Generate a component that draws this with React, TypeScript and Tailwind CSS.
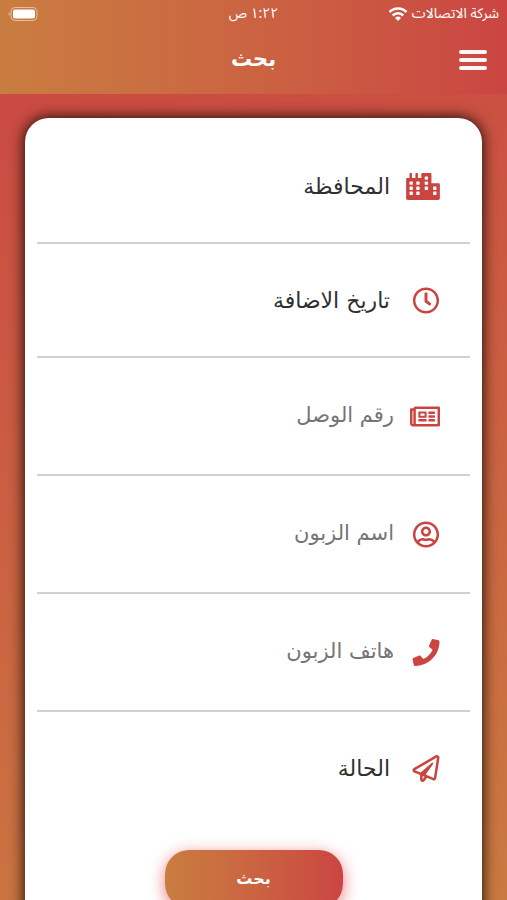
import type { ReactNode } from 'react';
import type { IconType } from 'react-icons';
import { FaCity, FaPhone, FaRegClock, FaRegNewspaper, FaRegPaperPlane, FaRegUserCircle } from 'react-icons/fa';

type Field = {
  id: string;
  label: string;
  icon: IconType;
  iconSize: string;
  kind: 'picker' | 'text' | 'tel';
};

const fields: Field[] = [
  { id: 'province', label: 'المحافظة', icon: FaCity, iconSize: 'w-[34px] h-[27px]', kind: 'picker' },
  { id: 'date', label: 'تاريخ الاضافة', icon: FaRegClock, iconSize: 'w-7 h-[27px]', kind: 'picker' },
  { id: 'receipt', label: 'رقم الوصل', icon: FaRegNewspaper, iconSize: 'w-[30px] h-[27px]', kind: 'text' },
  { id: 'customer', label: 'اسم الزبون', icon: FaRegUserCircle, iconSize: 'w-7 h-[27px]', kind: 'text' },
  { id: 'phone', label: 'هاتف الزبون', icon: FaPhone, iconSize: 'w-7 h-[27px]', kind: 'tel' },
  { id: 'status', label: 'الحالة', icon: FaRegPaperPlane, iconSize: 'w-7 h-[27px]', kind: 'picker' },
];

function StatusBar() {
  return (
    <div className="grid grid-cols-3 items-center h-7 px-2 text-sm">
      <div className="flex items-center gap-1 whitespace-nowrap">
        <span>شركة الاتصالات</span>
        <svg viewBox="0 0 20 15" className="w-5 h-4 shrink-0" fill="none" stroke="currentColor" strokeWidth="2.6">
          <path d="M1.5 5.5a12 12 0 0 1 17 0" />
          <path d="M4.7 9a7.5 7.5 0 0 1 10.6 0" />
          <path d="M10 14.5 7 11.4a4.3 4.3 0 0 1 6 0z" fill="currentColor" stroke="none" />
        </svg>
      </div>
      <span className="text-center">١:٢٢ ص</span>
      <svg viewBox="0 0 30 14" className="w-[30px] h-3.5 justify-self-end" fill="none">
        <path d="M1.5 5v4C.3 8.5.3 5.5 1.5 5z" fill="#fff" opacity=".6" />
        <rect x="3" y=".5" width="26" height="13" rx="4" stroke="#fff" strokeOpacity=".5" />
        <rect x="5" y="2.5" width="22" height="9" rx="2" fill="#fff" />
      </svg>
    </div>
  );
}

function Row({ icon: Icon, iconSize, picker, children }: { icon: IconType; iconSize: string; picker: boolean; children: ReactNode }) {
  return (
    <div className={`flex items-center gap-4 ps-[30px] border-b-2 border-[#d0d0d0] last-of-type:border-transparent ${picker ? 'h-[114px]' : 'h-[118px]'}`}>
      <span className={`shrink-0 text-[#cb4540] ${picker ? 'w-[34px]' : 'w-[30px]'}`}>
        <Icon className={iconSize} />
      </span>
      {children}
    </div>
  );
}

export default function App() {
  return (
    <div dir="rtl" className="flex flex-col h-screen overflow-hidden bg-linear-[165deg] from-[#cb4542] to-[#c97a40] font-['Noto_Sans_Arabic','Noto_Sans','DejaVu_Sans',sans-serif]">
      <header className="shrink-0 h-[94px] bg-linear-to-r from-[#c97d40] to-[#cb4542] text-white">
        <StatusBar />
        <div className="grid grid-cols-3 items-center h-16 px-5">
          <button type="button" aria-label="القائمة" className="flex flex-col gap-1 w-7">
            <span className="h-1 rounded-xs bg-white/95" />
            <span className="h-1 rounded-xs bg-white/95" />
            <span className="h-1 rounded-xs bg-white/95" />
          </button>
          <h1 className="text-center font-['DejaVu_Sans',sans-serif] text-[21px] font-bold">بحث</h1>
        </div>
      </header>

      <main className="grow px-[25px] pt-6 font-['DejaVu_Sans',sans-serif]">
        <form className="h-[900px] rounded-3xl bg-white px-3 pt-3 shadow-[0_0_14px_1px_rgba(0,0,0,0.85)]">
          {fields.map((f) => (
            <Row key={f.id} icon={f.icon} iconSize={f.iconSize} picker={f.kind === 'picker'}>
              {f.kind === 'picker' ? (
                <button type="button" className="grow text-start text-[22px] text-[#303030]">{f.label}</button>
              ) : (
                <input id={f.id} type={f.kind} dir="rtl" aria-label={f.label} placeholder={f.label} className="grow min-w-0 text-[21px] placeholder:text-[#757575] outline-none" />
              )}
            </Row>
          ))}
          <button type="submit" className="block mx-auto mt-6 w-[178px] h-[58px] rounded-3xl bg-linear-to-r from-[#c97d40] to-[#cb4542] text-white text-base font-bold shadow-[0_4px_16px_rgba(230,30,40,0.6)]">بحث</button>
        </form>
      </main>
    </div>
  );
}
